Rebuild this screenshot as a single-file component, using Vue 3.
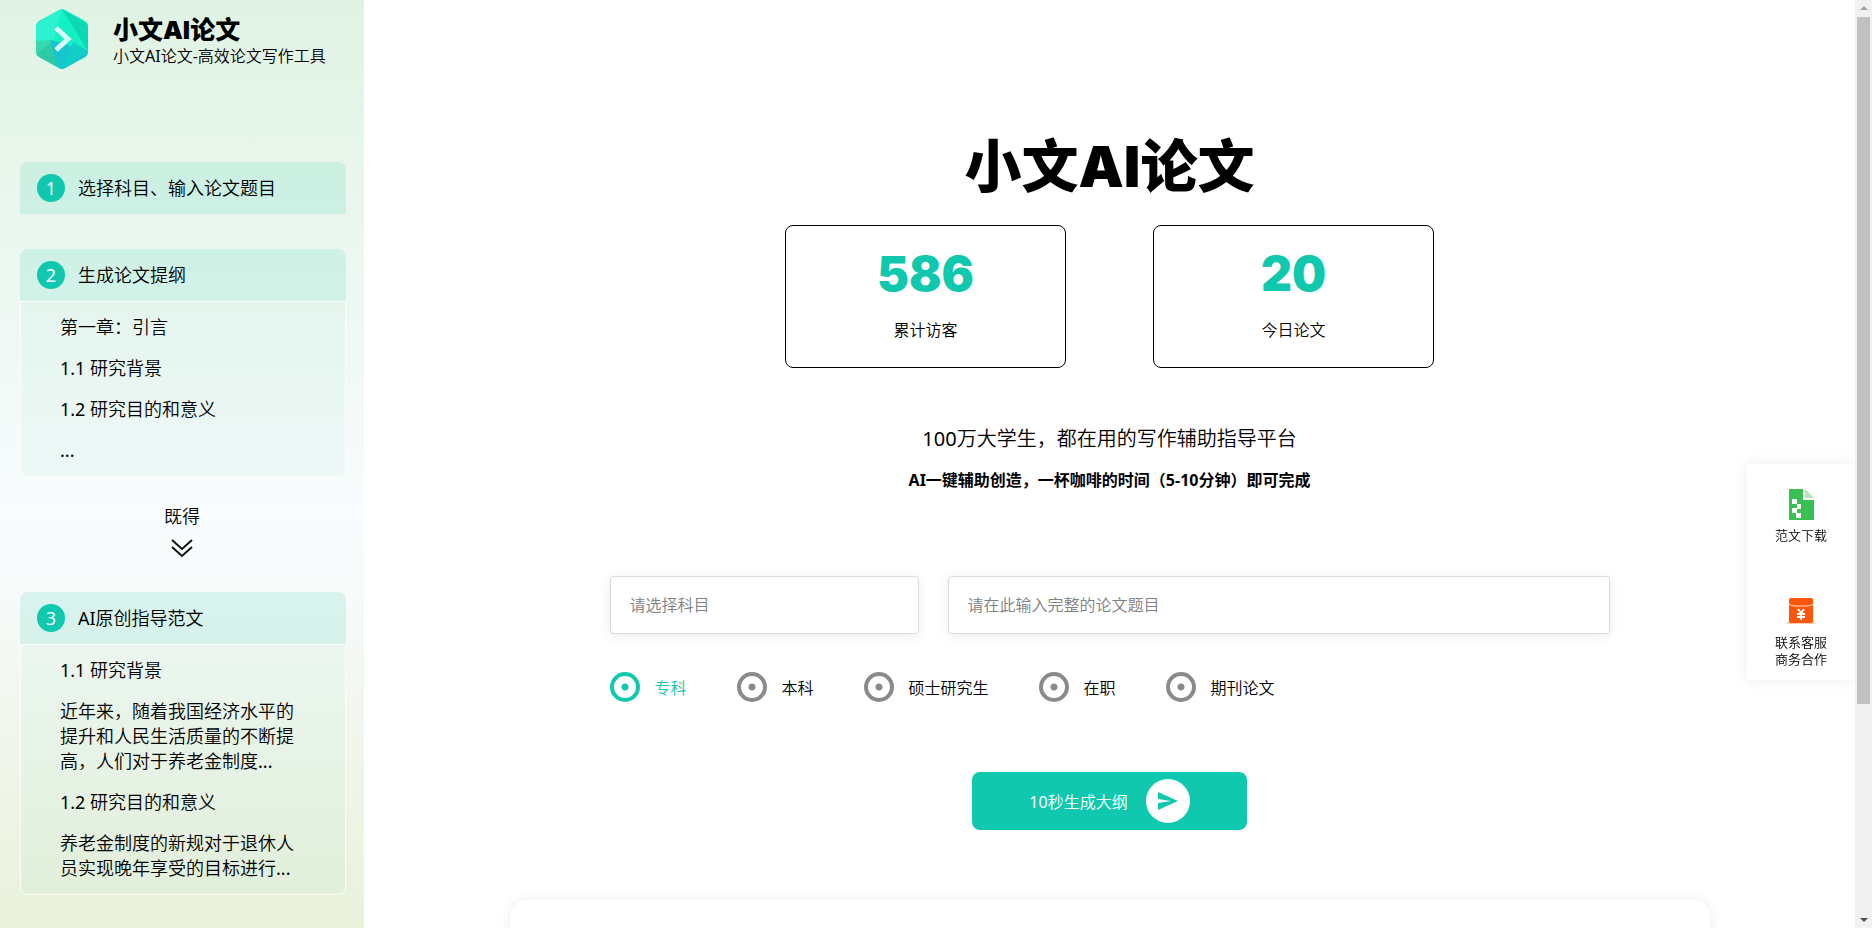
<template>
  <div class="page">
    <aside class="sidebar">
      <div class="brand">
        <svg class="logo" viewBox="0 0 52 60">
          <defs>
            <clipPath id="hex">
              <path d="M23 1Q26-1 29 1L49 12Q52 14 52 17V43Q52 46 49 48L29 59Q26 61 23 59L3 48Q0 46 0 43V17Q0 14 3 12Z" />
            </clipPath>
          </defs>
          <g clip-path="url(#hex)">
            <rect width="52" height="60" fill="#12f0c4" />
            <path d="M26 0L0 15V32L18 31Z" fill="#2df2d2" />
            <path d="M26 0L52 15V42Z" fill="#0cd9b4" />
            <path d="M0 32L18 31L26 60L0 46Z" fill="#35d9ae" />
            <path d="M0 46L18 31L22 60Z" fill="#2bcba8" />
            <path d="M14 31L52 42V60H22Z" fill="#17c5cd" />
            <path d="M37 33L52 42L26 60Z" fill="#12cfc6" />
          </g>
          <path d="M20 19L32 30L20 41" fill="none" stroke="#dcfbff" stroke-width="5" />
        </svg>
        <div>
          <h2 class="brand-name">小文AI论文</h2>
          <p class="brand-desc">小文AI论文-高效论文写作工具</p>
        </div>
      </div>

      <template v-for="step in steps" :key="step.no">
        <div v-if="step.no === 3" class="then">
          <span>既得</span>
          <svg width="24" height="24" viewBox="0 0 24 24" fill="none" stroke="#111" stroke-width="2">
            <path d="M2 3L12 12L22 3M2 10L12 19L22 10" />
          </svg>
        </div>
        <section class="step">
          <div class="step-head">
            <span class="step-no">{{ step.no }}</span>
            <span>{{ step.title }}</span>
          </div>
          <div v-if="step.lines.length" class="step-body">
            <p v-for="line in step.lines" :key="line">{{ line }}</p>
          </div>
        </section>
      </template>
    </aside>

    <main class="main">
      <h1 class="title">小文AI论文</h1>
      <div class="stats">
        <div v-for="item in stats" :key="item.label" class="stat">
          <strong>{{ item.value }}</strong>
          <span>{{ item.label }}</span>
        </div>
      </div>
      <p class="slogan">100万大学生，都在用的写作辅助指导平台</p>
      <p class="sub-slogan">AI一键辅助创造，一杯咖啡的时间（5-10分钟）即可完成</p>

      <form class="form" @submit.prevent="submit">
        <div class="fields">
          <select v-model="subject" class="field" aria-label="请选择科目">
            <option value="">请选择科目</option>
          </select>
          <input v-model="topic" class="field" type="text" placeholder="请在此输入完整的论文题目" aria-label="请在此输入完整的论文题目">
        </div>
        <div class="levels">
          <label v-for="item in levels" :key="item" class="level" :class="{ active: level === item }">
            <input v-model="level" type="radio" name="level" :value="item">
            <span>{{ item }}</span>
          </label>
        </div>
        <button class="submit-btn" type="submit">
          <span>10秒生成大纲</span>
          <span class="send">
            <svg width="20" height="18" viewBox="0 0 20 18" fill="#0fc8ae">
              <path d="M0 0L20 9L0 18V11L13 9L0 7Z" />
            </svg>
          </span>
        </button>
      </form>
      <div class="panel"></div>
    </main>

    <div class="float-bar">
      <a href="#" class="float-item">
        <svg width="32" height="32" viewBox="0 0 32 32">
          <path d="M4 1H18V12H29V32H4Z" fill="#39c053" />
          <path d="M20 1L29 10H20Z" fill="#b5e3b6" />
          <path d="M7 11h5v5h-5zM12 16h4v5h-4zM7 20h5v5h-5zM11 25h5v5h-5z" fill="#fff" />
        </svg>
        <span>范文下载</span>
      </a>
      <a href="#" class="float-item">
        <svg width="32" height="32" viewBox="0 0 32 32">
          <path d="M1 29L5 24H27L31 29Z" fill="#ffd0b5" />
          <path d="M4 11H28V26Q28 28 26 28H6Q4 28 4 26Z" fill="#fd560b" />
          <path d="M4 11V5Q4 3 6 3H26Q28 3 28 5V11Z" fill="#fd560b" />
          <path d="M4 9Q6 11 10 11H22Q26 11 28 9" fill="none" stroke="#ffe0d0" />
          <path d="M13 14L16 18L19 14M16 18V25M12 19H20M12 22H20" fill="none" stroke="#fff" stroke-width="2" />
        </svg>
        <span>联系客服<br>商务合作</span>
      </a>
    </div>

    <div class="scrollbar">
      <i class="arrow up"></i>
      <i class="thumb"></i>
      <i class="arrow down"></i>
    </div>
  </div>
</template>

<script setup>
import { ref } from 'vue'

const steps = [
  { no: 1, title: '选择科目、输入论文题目', lines: [] },
  { no: 2, title: '生成论文提纲', lines: ['第一章：引言', '1.1 研究背景', '1.2 研究目的和意义', '...'] },
  {
    no: 3,
    title: 'AI原创指导范文',
    lines: [
      '1.1 研究背景',
      '近年来，随着我国经济水平的提升和人民生活质量的不断提高，人们对于养老金制度...',
      '1.2 研究目的和意义',
      '养老金制度的新规对于退休人员实现晚年享受的目标进行...'
    ]
  }
]

const stats = [
  { value: 586, label: '累计访客' },
  { value: 20, label: '今日论文' }
]

const levels = ['专科', '本科', '硕士研究生', '在职', '期刊论文']

const subject = ref('')
const topic = ref('')
const level = ref('专科')

const submit = () => {
  console.log('生成大纲:', subject.value, topic.value, level.value)
}
</script>

<style>
body {
  margin: 0;
  background: #fff;
}
</style>

<style scoped>
.page {
  display: flex;
  height: 100vh;
  overflow: hidden;
  color: #000;
  font-family: "Noto Sans", "Noto Sans CJK SC DemiLight", "Noto Sans CJK SC", sans-serif;
  font-size: 16px;
}

.page * {
  box-sizing: border-box;
}

p,
h1,
h2 {
  margin: 0;
}

/* 左侧步骤 */
.sidebar {
  width: 364px;
  flex-shrink: 0;
  padding: 8px 18px 0 20px;
  background: linear-gradient(180deg, #e0f3e3 0%, #f8fcfe 55%, #f7fbfb 62%, #e9f1db 100%);
  font-size: 18px;
  line-height: 25px;
}

.brand {
  display: flex;
  align-items: flex-start;
  gap: 25px;
  height: 154px;
  padding-left: 16px;
}

.logo {
  width: 52px;
  height: 60px;
  margin-top: 1px;
}

.brand-name {
  padding-top: 8px;
  font-family: Inter, "Noto Sans CJK SC", sans-serif;
  font-size: 25px;
  font-weight: 900;
  line-height: 28px;
}

.brand-desc {
  font-size: 16px;
  line-height: 24px;
}

.step + .step {
  margin-top: 35px;
}

.step-head {
  display: flex;
  align-items: center;
  gap: 13px;
  height: 52px;
  padding-left: 17px;
  border-radius: 8px 8px 0 0;
  background: rgba(15, 200, 160, 0.13);
}

.step-no {
  width: 28px;
  height: 28px;
  border-radius: 50%;
  background: #0fc8ae;
  color: #fff;
  line-height: 28px;
  text-align: center;
}

.step-body {
  display: flex;
  flex-direction: column;
  gap: 16px;
  padding: 13px 39px;
  border: 1px solid rgba(255, 255, 255, 0.8);
  border-radius: 0 0 8px 8px;
  background: rgba(15, 180, 130, 0.04);
}

.then {
  display: flex;
  flex-direction: column;
  align-items: center;
  gap: 8px;
  height: 115px;
  padding: 27px 2px 0 0;
}

/* 主内容 */
.main {
  flex: 1;
  display: flex;
  flex-direction: column;
  align-items: center;
  margin-right: 17px;
  padding-top: 127px;
  overflow-y: auto;
  scrollbar-width: none;
}

.title {
  font-family: Inter, "Noto Sans CJK SC", sans-serif;
  font-size: 57px;
  font-weight: 900;
  line-height: 80px;
}

.stats {
  display: flex;
  gap: 87px;
  margin-top: 18px;
}

.stat {
  display: flex;
  flex-direction: column;
  align-items: center;
  gap: 14px;
  width: 281px;
  height: 143px;
  padding-top: 18px;
  border: 1px solid #000;
  border-radius: 8px;
}

.stat strong {
  color: #0fc8ae;
  font-family: Inter, sans-serif;
  font-size: 48px;
  font-weight: 900;
  line-height: 60px;
}

.stat span {
  line-height: 24px;
}

.slogan {
  margin-top: 56px;
  font-size: 20px;
  line-height: 30px;
}

.sub-slogan {
  margin-top: 14px;
  font-family: "Noto Sans", "Noto Sans CJK SC", sans-serif;
  font-weight: 700;
  line-height: 24px;
}

.form {
  display: flex;
  flex-direction: column;
  align-items: center;
  width: 1000px;
  max-width: 90%;
  margin-top: 84px;
}

.fields {
  display: grid;
  grid-template-columns: 309fr 662fr;
  gap: 29px;
  width: 100%;
}

.field {
  width: 100%;
  height: 58px;
  padding: 0 19px;
  border: 1px solid #dcdcdc;
  border-radius: 4px;
  outline: none;
  background: #fff;
  box-shadow: 0 2px 12px rgba(0, 0, 0, 0.08);
  color: #808080;
  font-family: inherit;
  font-size: 16px;
  appearance: none;
}

.field::placeholder {
  color: #808080;
}

.levels {
  display: flex;
  gap: 50px;
  width: 100%;
  margin-top: 38px;
}

.level {
  display: flex;
  align-items: center;
  gap: 15px;
  cursor: pointer;
}

.level.active {
  color: #0fc8ae;
}

.level input {
  width: 30px;
  height: 30px;
  margin: 0;
  border: 4px solid #8a8a8a;
  border-radius: 50%;
  background: radial-gradient(circle, #8a8a8a 0 3px, transparent 4px);
  appearance: none;
}

.level input:checked {
  border-color: #0fc8ae;
  background: radial-gradient(circle, #0fc8ae 0 3px, transparent 4px);
}

.submit-btn {
  display: flex;
  align-items: center;
  justify-content: center;
  gap: 18px;
  width: 275px;
  height: 58px;
  margin-top: 70px;
  border: none;
  border-radius: 8px;
  background: #0fc8ae;
  color: #fff;
  font-family: inherit;
  font-size: 16px;
  cursor: pointer;
}

.send {
  display: flex;
  align-items: center;
  justify-content: center;
  width: 44px;
  height: 44px;
  border-radius: 50%;
  background: #fff;
}

.panel {
  flex-shrink: 0;
  width: 1200px;
  max-width: 96%;
  height: 400px;
  margin-top: 70px;
  border-radius: 16px;
  background: #fff;
  box-shadow: 0 0 12px rgba(0, 0, 0, 0.08);
}

/* 右侧悬浮 */
.float-bar {
  position: fixed;
  top: 464px;
  right: 17px;
  display: flex;
  flex-direction: column;
  gap: 51px;
  width: 108px;
  padding: 24px 0 12px;
  background: #fff;
  box-shadow: 0 0 14px rgba(0, 0, 0, 0.08);
}

.float-item {
  display: flex;
  flex-direction: column;
  align-items: center;
  gap: 7px;
  color: #000;
  font-size: 13px;
  line-height: 17px;
  text-decoration: none;
}

.scrollbar {
  position: fixed;
  top: 0;
  right: 0;
  bottom: 0;
  display: flex;
  flex-direction: column;
  align-items: center;
  width: 17px;
  background: #f1f1f1;
}

.thumb {
  width: 13px;
  height: 74%;
  margin-bottom: auto;
  background: #c1c1c1;
}

.arrow {
  margin: 6px 0;
  border: 4px solid transparent;
}

.up {
  border-top: 0;
  border-bottom-color: #a3a3a3;
  margin-bottom: 7px;
}

.down {
  border-bottom: 0;
  border-top-color: #505050;
}
</style>
